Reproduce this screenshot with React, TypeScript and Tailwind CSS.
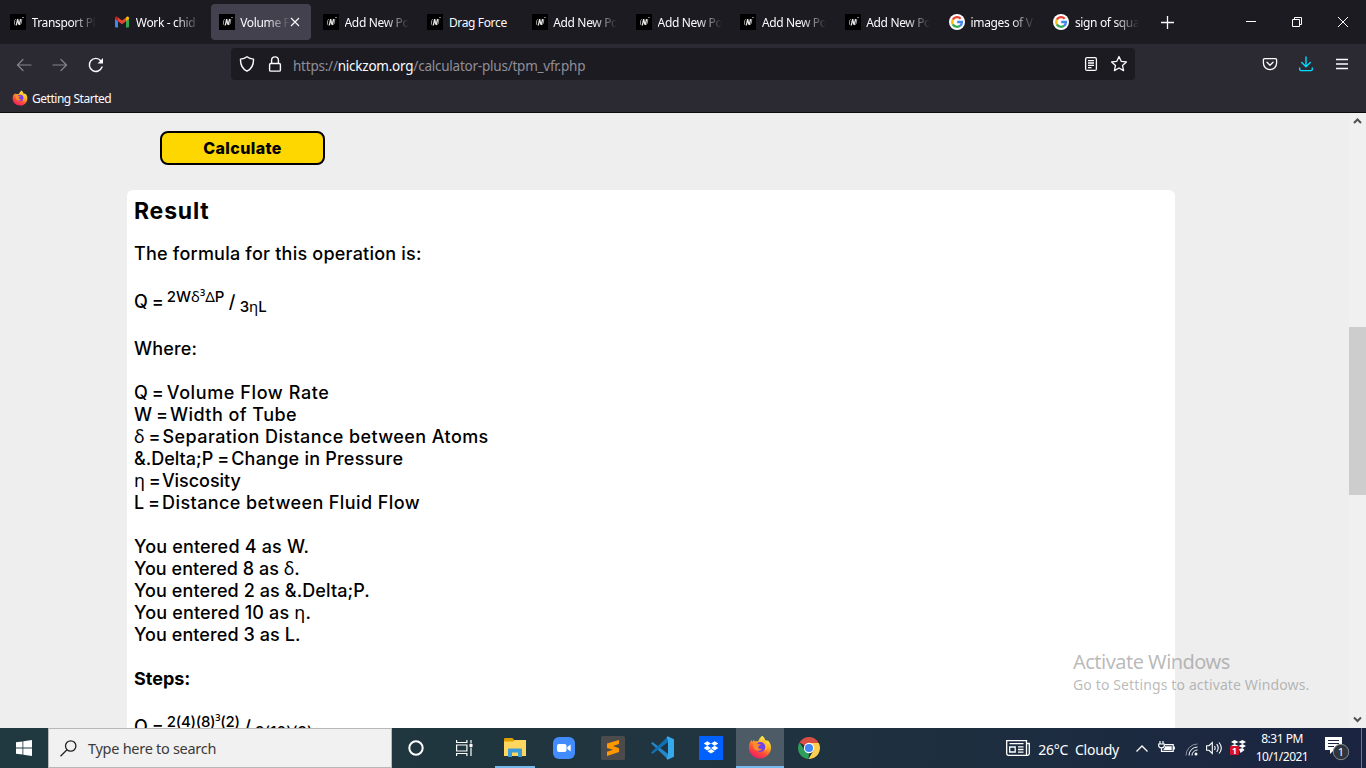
import type { ReactNode } from "react";

const tabs = [
  { icon: "nz", title: "Transport Pl" },
  { icon: "gmail", title: "Work - chid" },
  { icon: "nz", title: "Volume F", active: true },
  { icon: "nz", title: "Add New Po" },
  { icon: "nz", title: "Drag Force", full: true },
  { icon: "nz", title: "Add New Po" },
  { icon: "nz", title: "Add New Po" },
  { icon: "nz", title: "Add New Po" },
  { icon: "nz", title: "Add New Po" },
  { icon: "google", title: "images of V" },
  { icon: "google", title: "sign of squa" },
];

const NickzomIcon = () => (
  <svg width="16" height="16" viewBox="0 0 16 16" className="shrink-0">
    <rect width="16" height="16" fill="#000" />
    <path d="M5.800 5.200 4.700 6.500 4.400 10.300l1 .7" fill="none" stroke="#999" strokeWidth="1" />
    <path d="M6.300 11.300 7.600 5.300M7.600 5 8.900 10.500M9.300 11 10.600 5" fill="none" stroke="#e6e6e6" strokeWidth="1.300" />
    <path d="m11.800 5-.6 4.500-1.200 1.300M12.200 3.500h1.600" fill="none" stroke="#999" strokeWidth="1" />
  </svg>
);

const GmailIcon = () => (
  <svg width="16" height="16" viewBox="0 0 16 16" className="shrink-0">
    <path d="M1 4.500v8.200c0 .5.400.8.900.8H4V6.800z" fill="#4285f4" />
    <path d="M15 4.500v8.200c0 .5-.4.800-.9.800H12V6.800z" fill="#34a853" />
    <path d="M12 3.400v3.700l3-2.200V4c0-1.300-1.400-1.900-2.300-1.200z" fill="#fbbc04" />
    <path d="M1 4v.9l3 2.300V3.400l-.7-.6C2.400 2.100 1 2.700 1 4z" fill="#c5221f" />
    <path d="M4 3.400v3.800l4 3 4-3V3.400l-4 3z" fill="#ea4335" />
  </svg>
);

const GoogleIcon = () => (
  <svg width="16" height="16" viewBox="0 0 16 16" className="shrink-0">
    <circle cx="8" cy="8" r="8" fill="#fff" />
    <g fill="none" strokeWidth="2.300">
      <path d="M3.800 5.600A4.900 4.900 0 0 1 11.700 4.700" stroke="#ea4335" />
      <path d="M3.800 5.500a5 5 0 0 0 0 5" stroke="#fbbc05" />
      <path d="M3.800 10.400a4.900 4.900 0 0 0 7.400 1.200" stroke="#34a853" />
      <path d="M8.200 8h4.700c0 1.600-.6 2.900-1.700 3.800" stroke="#4285f4" />
    </g>
  </svg>
);

const FirefoxIcon = ({ size, id }: { size: number; id: string }) => (
  <svg width={size} height={size} viewBox="0 0 24 24" className="shrink-0">
    <defs>
      <linearGradient id={id} x1="0.8" y1="0" x2="0.25" y2="1">
        <stop offset="0.1" stopColor="#fff044" />
        <stop offset="0.4" stopColor="#ffa626" />
        <stop offset="0.65" stopColor="#ff5234" />
        <stop offset="1" stopColor="#f0146e" />
      </linearGradient>
    </defs>
    <path d="M14.200.8c1.800 1.400 2.700 3 3 4.500 1.100.3 2.600.1 3.700 1.200 1.500 2 2.300 4.200 2.100 6.500C22.700 19 17.800 23.400 12 23.400 5.700 23.400.9 18.500.9 12.500c0-3.300 1.300-5.900 2.800-7.400l.6 1.900 1.500-2.300 1 1.800c1.200-.4 2.300-.4 3.300-.1.800-2.200 2.300-4 4.100-5.600z" fill={`url(#${id})`} />
    <circle cx="12.400" cy="12" r="4.900" fill="#7542e5" />
    <path d="M5.300 7.500c3 .2 4.200.8 4.700 1.800h2.800c-.3 1.300-2.200 1.600-2.700 2.200.2 2.200 2.100 3 4.300 2.300-1.300 2.500-6.200 2.900-8.400-.4-1-1.700-1.300-4.300-.7-5.900z" fill="#ff8a2b" />
    <path d="M12 6.700c2.900-.3 5.300 1.200 5.800 4.300.2 2-.7 3.700-1.500 4.800 2.300-.9 3.500-3.400 2.900-5.800-.5-2.300-2.400-3.800-3.400-5.600-1.200.4-2.900 1.200-3.800 2.300z" fill="#ffc12e" />
  </svg>
);

const BrowserTab = ({ tab }: { tab: (typeof tabs)[number] }) => (
  <div className={`mr-[4.350px] flex h-9 w-[100px] shrink-0 items-center rounded pl-2 ${tab.active ? "bg-[#42414d]" : ""}`}>
    {tab.icon === "nz" && <NickzomIcon />}
    {tab.icon === "gmail" && <GmailIcon />}
    {tab.icon === "google" && <GoogleIcon />}
    <span
      className={`ml-[5.500px] overflow-hidden whitespace-nowrap pt-[2px] text-[12px] leading-5 tracking-[-0.350px] ${tab.active ? "w-[50px]" : "w-[64px]"} ${tab.full ? "" : "[mask-image:linear-gradient(to_left,transparent,black_24px)]"}`}
    >
      {tab.title}
    </span>
    {tab.active && (
      <svg width="10" height="10" viewBox="0 0 10 10" stroke="#fbfbfe" strokeWidth="1.100" className="shrink-0">
        <path d="m1 1 8 8M9 1 1 9" />
      </svg>
    )}
  </div>
);

const TabStrip = () => (
  <div className="flex h-11 items-center bg-[#1c1b22] pl-[2px]">
    {tabs.map((tab, i) => (
      <BrowserTab key={i} tab={tab} />
    ))}
    <svg width="13" height="13" viewBox="0 0 13 13" stroke="#fbfbfe" strokeWidth="1.300" className="ml-[11px] mt-px">
      <path d="M6.500 0v13M0 6.500h13" />
    </svg>
    <div className="ml-auto flex items-center gap-9 pr-[18px]">
      <svg width="10" height="10" viewBox="0 0 10 10" stroke="#fff">
        <path d="M0 4.500h10" />
      </svg>
      <svg width="10" height="10" viewBox="0 0 10 10" fill="none" stroke="#fff">
        <path d="M.5 2.500h7v7h-7zM2.500 2.500v-2h7v7h-2" />
      </svg>
      <svg width="10" height="10" viewBox="0 0 10 10" stroke="#fff">
        <path d="m0 0 10 10M10 0 0 10" />
      </svg>
    </div>
  </div>
);

const NavBar = () => (
  <div className="flex h-10 items-center bg-[#2b2a33] pt-px">
    <div className="flex w-[231px] items-center gap-5 pl-4">
      <svg width="16" height="16" viewBox="0 0 16 16" fill="none" stroke="#85848c" strokeWidth="1.200" strokeLinecap="round">
        <path d="M15 8H1.500M7 2.500 1.500 8 7 13.500" />
      </svg>
      <svg width="16" height="16" viewBox="0 0 16 16" fill="none" stroke="#85848c" strokeWidth="1.200" strokeLinecap="round">
        <path d="M1 8h13.500M9 2.500 14.500 8 9 13.500" />
      </svg>
      <svg width="16" height="16" viewBox="0 0 16 16" fill="none" stroke="#fbfbfe" strokeWidth="1.400" strokeLinecap="round">
        <path d="M14 10A6.500 6.500 0 1 1 12.800 3.700" />
        <path d="M15 1v5.400H9.600z" fill="#fbfbfe" stroke="none" />
      </svg>
    </div>
    <div className="-mt-px flex h-8 w-[904px] items-center rounded bg-[#1c1b22] pl-2">
      <svg width="16" height="16" viewBox="0 0 16 16" fill="none" stroke="#fbfbfe" strokeWidth="1.400" strokeLinejoin="round">
        <path d="M8 .8c2 1.500 4.300 2.100 6.500 2.300.2 5.500-1.700 9.800-6.500 12.100C3.200 12.900 1.300 8.600 1.500 3.100 3.700 2.900 6 2.300 8 .8z" />
      </svg>
      <svg width="16" height="16" viewBox="0 0 16 16" fill="none" stroke="#fbfbfe" strokeWidth="1.400" className="ml-3">
        <rect x="2.600" y="7.500" width="10.800" height="7.600" rx="1.200" />
        <path d="M4.600 7.500V4.300a3.400 3.400 0 0 1 6.800 0v3.200" />
      </svg>
      <span className="ml-[10px] pt-[3px] text-[13.500px] leading-5 tracking-[-0.230px] text-[#8f8f98]">
        https://<span className="text-[#fbfbfe]">nickzom.org</span>/calculator-plus/tpm_vfr.php
      </span>
      <svg width="16" height="16" viewBox="0 0 16 16" fill="none" stroke="#fbfbfe" strokeWidth="1.300" className="ml-auto">
        <rect x="2.600" y="1.600" width="10.800" height="12.800" rx="1.500" />
        <path d="M5 4.700h6M5 7h6M5 9.300h6M5 11.600h3.500" />
      </svg>
      <svg width="18" height="18" viewBox="0 0 18 18" fill="none" stroke="#fbfbfe" strokeWidth="1.300" strokeLinejoin="round" className="ml-[11px] mr-[7px]">
        <path d="m9 1.500 2.200 4.800 5.200.6-3.900 3.500 1.100 5.200L9 13l-4.600 2.600 1.100-5.200-3.900-3.500 5.200-.6z" />
      </svg>
    </div>
    <div className="-mt-px ml-auto flex items-center gap-5 pr-4">
      <svg width="16" height="16" viewBox="0 0 16 16" fill="none" stroke="#fbfbfe" strokeWidth="1.300" strokeLinejoin="round" strokeLinecap="round">
        <path d="M2.500 2.600h11c.7 0 1.100.4 1.100 1.100V7a6.600 6.600 0 0 1-13.200 0V3.700c0-.7.400-1.100 1.100-1.100z" />
        <path d="m5 6.300 3 2.900 3-2.900" />
      </svg>
      <svg width="16" height="16" viewBox="0 0 16 16" fill="none" stroke="#00ddff" strokeWidth="1.400" strokeLinecap="round" strokeLinejoin="round">
        <path d="M8 1v9.500M3.700 6.600 8 10.700l4.300-4.100M1.700 12v1.300c0 .8.500 1.300 1.300 1.300h10c.8 0 1.300-.5 1.300-1.300V12" />
      </svg>
      <svg width="16" height="16" viewBox="0 0 16 16" stroke="#fbfbfe" strokeWidth="1.300">
        <path d="M2 3.500h12M2 8h12M2 12.500h12" />
      </svg>
    </div>
  </div>
);

const Line = ({ children, className = "tracking-[0.180px]" }: { children?: ReactNode; className?: string }) => (
  <p className={`h-[22px] whitespace-nowrap ${className}`}>{children}</p>
);

const Equals = () => <span className="tracking-[-0.900px] whitespace-pre"> = </span>;

const Greek = ({ children }: { children: ReactNode }) => (
  <span className="font-['Noto_Sans',sans-serif] font-normal leading-none">{children}</span>
);

const Definition = ({ symbol, children, className }: { symbol: ReactNode; children: ReactNode; className: string }) => (
  <p className="h-[22px] whitespace-nowrap">
    {symbol}
    <Equals />
    <span className={className}>{children}</span>
  </p>
);

const Formula = ({ top, bottom }: { top: ReactNode; bottom: ReactNode }) => (
  <div className="flex h-[29px] items-start whitespace-pre pt-1">
    <span>Q</span>
    <Equals />
    <span className="-mt-[5px] text-[15px]">{top}</span>
    <span className="tracking-[-0.300px]"> / </span>
    <span className="mt-[5px] text-[15px]">{bottom}</span>
  </div>
);

const ResultCard = () => (
  <div className="ml-[127px] mt-[25px] h-[600px] w-[1048px] rounded-md bg-white px-[7px] pt-[6px] text-[18px] font-medium leading-[22px]">
    <h2 className="h-[47px] text-[23px] font-bold leading-[31px] tracking-[0.800px]">Result</h2>
    <Line className="tracking-[0.220px]">The formula for this operation is:</Line>
    <Line />
    <Formula
      top={<>2W<Greek>δ³Δ</Greek>P</>}
      bottom={<>3<Greek>η</Greek>L</>}
    />
    <Line />
    <Line>Where:</Line>
    <Line />
    <Definition symbol="Q" className="tracking-[0.600px]">Volume Flow Rate</Definition>
    <Definition symbol="W" className="-ml-px tracking-[0.450px]">Width of Tube</Definition>
    <Definition symbol={<Greek>δ</Greek>} className="-ml-px tracking-[0.410px]">Separation Distance between Atoms</Definition>
    <Definition symbol="&.Delta;P" className="-ml-px tracking-[0.230px]">Change in Pressure</Definition>
    <Definition symbol={<Greek>η</Greek>} className="-ml-[2px] tracking-[-0.050px]">Viscosity</Definition>
    <Definition symbol="L" className="-ml-px tracking-[0.410px]">Distance between Fluid Flow</Definition>
    <Line />
    <Line>You entered 4 as W.</Line>
    <Line className="tracking-[0.020px]">You entered 8 as <Greek>δ</Greek>.</Line>
    <Line className="tracking-[0.100px]">You entered 2 as &amp;.Delta;P.</Line>
    <Line className="tracking-[0.180px]">You entered 10 as <Greek>η</Greek>.</Line>
    <Line className="tracking-[0.080px]">You entered 3 as L.</Line>
    <Line />
    <Line className="font-bold">Steps:</Line>
    <Line />
    <Formula
      top={<span className="tracking-[-0.300px]">2(4)(8)<Greek>³</Greek>(2)</span>}
      bottom={<span className="tracking-[0.100px]">3(10)(3)</span>}
    />
  </div>
);

const Scrollbar = () => (
  <div className="flex w-[17px] flex-col items-center bg-[#f0f0f0]">
    <svg width="17" height="17" viewBox="0 0 17 17" fill="none" stroke="#505050" strokeWidth="2">
      <path d="m5 10 3.500-3.500L12 10" />
    </svg>
    <div className="mt-[197px] h-[168px] w-full bg-[#cdcdcd]" />
    <svg width="17" height="17" viewBox="0 0 17 17" fill="none" stroke="#505050" strokeWidth="2" className="mt-auto">
      <path d="M5 6.500 8.500 10 12 6.500" />
    </svg>
  </div>
);

const AppSlot = ({ children, className = "" }: { children: ReactNode; className?: string }) => (
  <div className={`flex h-10 w-12 items-center justify-center ${className}`}>{children}</div>
);

const Taskbar = () => (
  <div className="flex h-10 items-center bg-linear-to-r from-[#20383f] via-[#20353f] to-[#1a2440] text-white">
    <AppSlot>
      <svg width="16" height="16" viewBox="0 0 16 16" fill="#fff">
        <path d="M0 2.300 6.500 1.400v6.200H0zM7.300 1.300 16 0v7.600H7.300zM0 8.400h6.500v6.200L0 13.700zM7.300 8.400H16V16l-8.700-1.200z" />
      </svg>
    </AppSlot>
    <div className="flex h-10 w-[344px] items-center border border-[#b9b9b9] bg-[#f1f1f1] pl-[11px] text-[#3b3b3b]">
      <svg width="17" height="17" viewBox="0 0 17 17" fill="none" stroke="#222" strokeWidth="1.300">
        <circle cx="10.700" cy="6" r="5.200" />
        <path d="m7 9.800-6.500 6.500" />
      </svg>
      <span className="ml-[11px] pt-[2px] text-[14.500px] tracking-[-0.280px]">Type here to search</span>
    </div>
    <AppSlot>
      <svg width="16" height="16" viewBox="0 0 16 16" fill="none" stroke="#fff" strokeWidth="2">
        <circle cx="8" cy="8" r="6.700" />
      </svg>
    </AppSlot>
    <AppSlot>
      <svg width="17" height="16" viewBox="0 0 17 16" fill="none" stroke="#fff" strokeWidth="1.200">
        <path d="M.6 0v2.500h10.300V0M.6 16v-2.500h10.300V16M.6 5h10.300v6H.6zM15 0v3.500M15 7.500V16" />
        <path d="M13.500 4h3v3h-3z" fill="#fff" stroke="none" />
      </svg>
    </AppSlot>
    <AppSlot className="ml-[7px] w-10! border-b-2 border-[#76b9ed]">
      <svg width="22" height="19" viewBox="0 0 22 19" className="mt-[1px]">
        <path d="M0 1.500C0 .7.500 0 1.300 0h7l2 2H22v3H0z" fill="#e0a100" />
        <path d="M0 3.500h9l2-1.500h11v16H0z" fill="#ffd75e" />
        <path d="M4 19v-7.200c0-.8.500-1.300 1.300-1.300h11.400c.8 0 1.300.5 1.300 1.300V19h-4v-4.500H8V19z" fill="#3c9bd9" />
      </svg>
    </AppSlot>
    <AppSlot className="ml-[5px]">
      <svg width="22" height="22" viewBox="0 0 22 22">
        <rect width="22" height="22" rx="6" fill="#438cff" />
        <rect x="4" y="7" width="9.500" height="8" rx="2" fill="#fff" />
        <path d="m14.300 10 3.400-2.500v7L14.300 12z" fill="#fff" />
      </svg>
    </AppSlot>
    <AppSlot className="ml-px">
      <svg width="24" height="24" viewBox="0 0 24 24">
        <rect width="24" height="24" rx="1.500" fill="#4b4b4b" />
        <path d="M6 7.500 18 4v4l-6 2 6 2.200V16L6 20v-4.200l6-2L6 12z" fill="#ff9800" />
      </svg>
    </AppSlot>
    <AppSlot className="ml-px">
      <svg width="24" height="24" viewBox="0 0 24 24">
        <path d="M1 7.300 2.500 6 18 18v5.500z" fill="#2489ca" />
        <path d="m1 16.600 1.500 1.400L18 6V.5z" fill="#1070b3" />
        <path d="M17.500.3 24 3.300v17.400l-6.500 3L16.500 22 18 20V4l-1.500-2z" fill="#35a9ee" />
      </svg>
    </AppSlot>
    <AppSlot className="ml-px">
      <svg width="24" height="24" viewBox="0 0 24 24">
        <rect width="24" height="24" fill="#0061ff" />
        <path d="m8.300 5.200 3.700 2.300-3.700 2.300-3.600-2.300zM15.700 5.200l3.600 2.300-3.600 2.300L12 7.500zM8.300 9.800l3.700 2.300-3.700 2.300-3.600-2.300zM15.700 9.800l3.600 2.300-3.600 2.300-3.700-2.300zM8.400 15.200l3.600-2.300 3.700 2.300L12 17.500z" fill="#fff" />
      </svg>
    </AppSlot>
    <AppSlot className="ml-px border-b-2 border-[#76b9ed] bg-[#4d5b66]">
      <FirefoxIcon size={24} id="ffTask" />
    </AppSlot>
    <AppSlot className="ml-px">
      <svg width="22" height="22" viewBox="0 0 22 22">
        <path d="M11 11 1.500 5.500A11 11 0 0 1 20.500 5.500z" fill="#d94f43" />
        <path d="M1.500 5.500 6.700 13.500 11 16v.5L10.500 22A11 11 0 0 1 1.500 5.500z" fill="#2f9e5b" />
        <path d="M11 6h9.800A11 11 0 0 1 10.500 22l5-8.500z" fill="#fbd051" />
        <circle cx="11" cy="11" r="5.200" fill="#fff" />
        <circle cx="11" cy="11" r="4.100" fill="#4285f4" />
      </svg>
    </AppSlot>

    {/* System tray */}
    <div className="ml-auto flex h-10 items-center">
      <svg width="24" height="16" viewBox="0 0 24 16" fill="none" stroke="#fff" strokeWidth="1.300">
        <path d="M20.500 15.300H2.500C1.400 15.300.7 14.600.7 13.500V.7h19.800zM20.500 3.500h2.800v10c0 1.100-.7 1.800-1.800 1.800h-1M3.500 3.700h14M12 6.900h5.500M12 9.500h5.500M12 12.200h5.500M3.700 7h5.500v5H3.700z" />
      </svg>
      <span className="ml-2 whitespace-pre pt-[2px] text-[14px] tracking-[-0.220px]">26°C  Cloudy</span>
      <svg width="12" height="7" viewBox="0 0 12 7" fill="none" stroke="#fff" strokeWidth="1.300" className="ml-[17px]">
        <path d="m.5 6.500 5.500-5.500 5.500 5.500" />
      </svg>
      <svg width="17" height="14" viewBox="0 0 17 14" fill="none" stroke="#fff" strokeWidth="1.200" className="ml-[10px]">
        <path d="M2 0v2.500M5 0v2.500M.7 3h5.600v1.500c0 1.500-1 2.300-2.800 2.300S.7 6 .7 4.500zM3.500 7v3.400h11.700V3.600H7M16.300 5.500v3" />
        <path d="M7 5.200h6.700v3.700H5.500V8C6.500 7.500 7 6.500 7 5.200z" fill="#fff" stroke="none" />
      </svg>
      <svg width="13" height="13" viewBox="0 0 13 13" fill="none" stroke="#fff" strokeWidth="1" className="ml-[10px] mt-[3px]">
        <path d="M1 12.500A11.500 11.500 0 0 1 12.500 1" stroke="#8b93a2" />
        <path d="M4 12.500A8.500 8.500 0 0 1 12.500 4M7 12.500A5.500 5.500 0 0 1 12.500 7" />
        <circle cx="11" cy="11" r="1.500" fill="#fff" stroke="none" />
      </svg>
      <svg width="17" height="14" viewBox="0 0 17 14" fill="none" stroke="#fff" strokeWidth="1.100" className="ml-[8px]">
        <path d="M.6 4.700H3L6.300 1.500v11L3 9.300H.6zM8.500 5c.8 1.200.8 2.800 0 4M10.700 3.200c1.900 2.400 1.900 5.200 0 7.600M13 1.500c2.900 3.400 2.900 7.600 0 11" />
      </svg>
      <svg width="17" height="16" viewBox="0 0 17 16" className="ml-[7px]">
        <path d="m4.500 0 4 2-4 2-3.500-2zM12.500 0 16 2l-3.500 2-4-2zM4.500 4l4 2-4 2L1 6zM12.500 4 16 6l-3.500 2-4-2zM9 9l3.500-1 2 2-4 3z" fill="#fff" />
        <rect y="6" width="9" height="9" rx="1" fill="#d9102c" />
        <text x="4.500" y="13.500" fontSize="8.500" fontWeight="700" fill="#fff" textAnchor="middle">1</text>
      </svg>
      <div className="ml-[8px] w-[54px] text-center text-[12px] leading-[18px] tracking-[-0.500px]">
        <p>8:31 PM</p>
        <p>10/1/2021</p>
      </div>
      <div className="relative ml-[16px] h-6 w-[26px]">
        <svg width="26" height="26" viewBox="0 0 26 26">
          <path d="M0 1h17v13H9l-4 4v-4H0z" fill="#fff" />
          <path d="M3 4.500h11M3 7.500h11M3 10.500h6" stroke="#1b2742" />
          <circle cx="16" cy="16" r="7.700" fill="#30343c" stroke="#84878c" />
          <text x="16" y="20" fontSize="11" fill="#fff" textAnchor="middle">1</text>
        </svg>
      </div>
      <div className="ml-[10px] mr-[4px] h-10 w-px bg-[#6f788a]" />
    </div>
  </div>
);

export default function App() {
  return (
    <div className="relative flex h-[768px] w-[1366px] flex-col overflow-hidden bg-[#eeeeee] font-['Noto_Sans','Open_Sans',sans-serif] text-[#fbfbfe]">
      <TabStrip />
      <NavBar />
      <div className="flex h-[29px] items-center border-b border-[#0c0c0d] bg-[#2b2a33] pl-3">
        <FirefoxIcon size={16} id="ffBookmark" />
        <span className="ml-1 pt-[2px] text-[12px] tracking-[-0.470px]">Getting Started</span>
      </div>

      <main className="flex h-[615px] overflow-hidden font-['Inter','Noto_Sans',sans-serif] text-black">
        <div className="flex-1">
          <button className="ml-40 mt-[18px] block h-[34px] w-[165px] rounded-lg border-2 border-black bg-[#ffd700] text-[16px] font-extrabold tracking-[0.400px]">
            Calculate
          </button>
          <ResultCard />
        </div>
        <Scrollbar />
      </main>

      <Taskbar />

      {/* Activation watermark */}
      <div className="absolute left-[1073px] top-[648px] whitespace-nowrap text-[#8c8c8c]/60">
        <p className="text-[20px] leading-[27px] tracking-[-0.530px]">Activate Windows</p>
        <p className="text-[14px] leading-[20px] tracking-[0.130px]">Go to Settings to activate Windows.</p>
      </div>
    </div>
  );
}
